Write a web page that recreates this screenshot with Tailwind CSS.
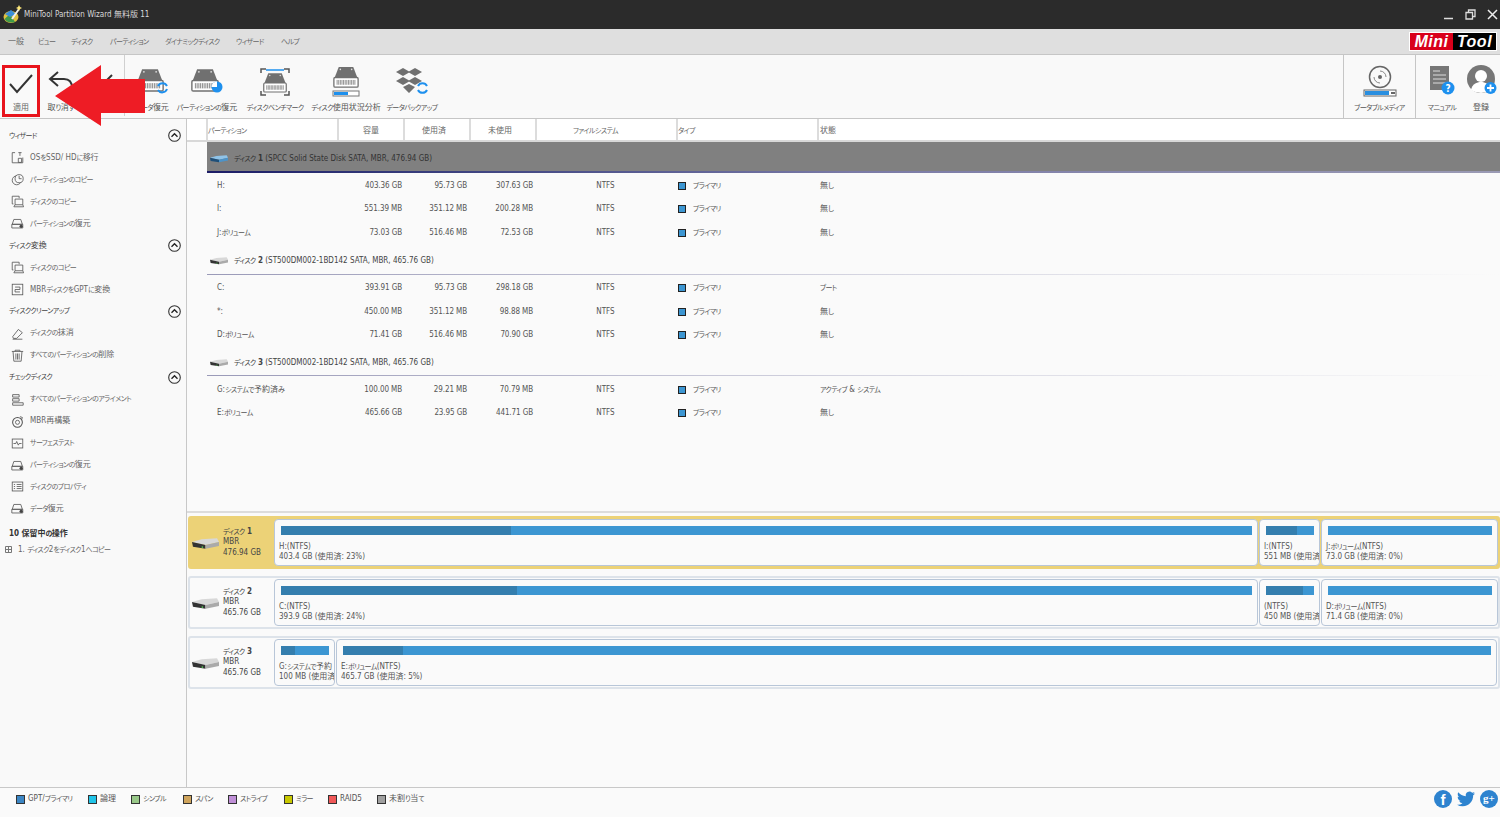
<!DOCTYPE html>
<html lang="ja">
<head>
  <meta charset="UTF-8" />
  <title>MiniTool Partition Wizard</title>
  <script src="https://cdn.jsdelivr.net/npm/@tailwindcss/browser@4"></script>
</head>
<body class="w-[1500px] h-[817px] overflow-hidden flex flex-col bg-[#fafafa] text-[#555] text-[8px] font-['DejaVu_Sans_Condensed','Noto_Sans_CJK_JP',sans-serif]">

  <svg class="hidden">
    <symbol id="hdd" viewBox="0 0 32 26">
      <path d="M7 0H25L30 13H2Z" fill="#707070"/>
      <circle cx="9" cy="3" r="1" fill="#ddd"/><circle cx="23" cy="3" r="1" fill="#ddd"/>
      <rect x="1" y="13" width="30" height="12" rx="1.5" fill="#fff" stroke="#707070" stroke-width="1.6"/>
      <path d="M5 16V22M7 16V22M9 16V22M11 16V22M13 16V22M15 16V22M17 16V22M19 16V22M21 16V22M23 16V22M25 16V22M27 16V22" stroke="#777" stroke-width="1"/>
    </symbol>
    <symbol id="drive" viewBox="0 0 28 14">
      <path d="M0 6L10 3L26 2L28 6L14 9Z" fill="#d8d8d8"/>
      <path d="M0 6L14 9V13L1 11Z" fill="#333"/>
      <path d="M14 9L28 6V10L14 13Z" fill="#aaa"/>
      <rect x="10" y="10.500" width="1.500" height="1.500" fill="#5c5"/>
    </symbol>
    <symbol id="ssd" viewBox="0 0 28 14">
      <path d="M0 6L10 3L26 2L28 6L14 9Z" fill="#8fc3e8"/>
      <path d="M0 6L14 9V13L1 11Z" fill="#1f4f78"/>
      <path d="M14 9L28 6V10L14 13Z" fill="#4d93c8"/>
    </symbol>
    <symbol id="s-copy" viewBox="0 0 16 16">
      <path d="M3 11H1.500V1.500H10V4M5 5H14.500V12H5ZM3.500 14.500H15.500M5 12L3.500 14.500M14.500 12L15.500 14.500" fill="none" stroke="#555"/>
    </symbol>
    <symbol id="s-drive" viewBox="0 0 16 16">
      <path d="M3.500 3H12L14 9H1.500ZM1 9H14.500V13.500H1Z" fill="none" stroke="#555"/>
      <circle cx="12.500" cy="11.500" r="2" fill="#444"/>
    </symbol>
  </svg>

  <header class="h-[29px] shrink-0 bg-[#2b2b2b] flex items-center text-[#d8d8d8] pl-[3px] pr-[2px]">
    <svg class="w-[19px] h-[19px] mr-[2px]" viewBox="0 0 19 19">
      <ellipse cx="8" cy="12" rx="7.500" ry="6" fill="#e0c040"/>
      <path d="M1.500 14L7 9L12 17Q5 19 1.500 14Z" fill="#3f9a4a"/>
      <path d="M2 9L8 5L13 9L7 12Z" fill="#3b8ed8"/>
      <path d="M9 14L16 4" stroke="#eee" stroke-width="2"/>
      <path d="M16 0L17 2L19 3L17 4L16 6L15 4L13 3L15 2Z" fill="#ffe97a"/>
    </svg>
    <span>MiniTool Partition Wizard 無料版 11</span>
    <div class="ml-auto flex items-center gap-[11px]">
      <svg class="w-[11px] h-[11px]" viewBox="0 0 11 11"><path d="M1 9.500H10" stroke="#ddd" stroke-width="1.500"/></svg>
      <svg class="w-[11px] h-[11px]" viewBox="0 0 11 11"><path d="M3.500 3V1H10V7.500H8M1 3.500H7.500V10H1Z" fill="none" stroke="#ddd" stroke-width="1.300"/></svg>
      <svg class="w-[11px] h-[11px]" viewBox="0 0 11 11"><path d="M1 1L10 10M10 1L1 10" stroke="#eee" stroke-width="1.500"/></svg>
    </div>
  </header>

  <nav class="h-[26px] shrink-0 bg-[#dfdfdf] border-b border-[#c6c6c6] flex items-center relative pl-[8px] text-[#666]">
    <span class="w-[30px]">一般</span>
    <span class="w-[33px]">ビュー</span>
    <span class="w-[39px]">ディスク</span>
    <span class="w-[55px]">パーティション</span>
    <span class="w-[71px]">ダイナミックディスク</span>
    <span class="w-[45px]">ウィザード</span>
    <span>ヘルプ</span>
    <div class="absolute right-[3px] top-[3px] flex h-[19px] w-[88px] border border-white text-white font-bold italic text-[16px] leading-[17px] tracking-[.5px] font-['Liberation_Sans',sans-serif]">
      <span class="w-[44px] bg-[#d9001b] text-center">Mini</span>
      <span class="w-[44px] bg-black text-center">Tool</span>
    </div>
  </nav>

  <section class="h-[64px] shrink-0 bg-[#f9f9f9] border-b border-[#c6c6c6] flex relative">
    <div class="w-[125px] shrink-0 flex border-r border-[#d0d0d0] mb-[2px]">
      <button class="w-[38px] h-[52px] mt-[10px] ml-[2px] border-[3px] border-[#e8141c] flex flex-col items-center">
        <svg class="w-[28px] h-[24px] mt-[4px]" viewBox="0 0 28 24"><path d="M3 12L10 20L25 3" fill="none" stroke="#333" stroke-width="2"/></svg>
        <span class="mt-[7px] text-[#666] leading-[10px]">適用</span>
      </button>
      <div class="w-[42px] mt-[10px] flex flex-col items-center">
        <svg class="w-[26px] h-[20px] mt-[5px]" viewBox="0 0 26 20"><path d="M10 2L2 9L10 16M2 9H16C21 9 24 12 24 18" fill="none" stroke="#333" stroke-width="2"/></svg>
        <span class="mt-[12px] whitespace-nowrap">取り消す</span>
      </div>
      <div class="w-[40px] mt-[10px] flex flex-col items-center">
        <svg class="w-[14px] h-[14px] mt-[8px] ml-[9px]" viewBox="0 0 14 14"><path d="M2 12L12 2" stroke="#333" stroke-width="2"/></svg>
      </div>
    </div>
    <div id="tools" class="flex-1 flex"></div>
    <div class="w-[72px] border-l border-[#c6c6c6] flex flex-col items-center">
      <svg class="w-[36px] h-[32px] mt-[10px]" viewBox="0 0 36 32">
        <circle cx="18" cy="12" r="10.500" fill="none" stroke="#666" stroke-width="1.500"/>
        <circle cx="18" cy="12" r="2" fill="#666"/>
        <path d="M18 6A6 6 0 0 1 24 12M18 18A6 6 0 0 1 12 12" fill="none" stroke="#888"/>
        <rect x="2" y="25" width="32" height="6" fill="#fff" stroke="#666"/>
        <rect x="3" y="26" width="24" height="4" fill="#2a8fe0"/>
        <rect x="29" y="27" width="4" height="2" fill="#666"/>
      </svg>
      <span class="mt-[5px] whitespace-nowrap">ブータブルメディア</span>
    </div>
    <div class="w-[85px] border-l border-[#c6c6c6] flex pl-[14px] gap-[12px] relative whitespace-nowrap">
      <div class="flex flex-col items-center w-[24px]">
        <svg class="w-[26px] h-[32px] mt-[9px]" viewBox="0 0 26 32">
          <rect x="1" y="2" width="19" height="24" fill="#777"/>
          <path d="M4 7H11M4 11H17M4 15H17M4 19H17" stroke="#ddd"/>
          <circle cx="19" cy="24" r="6.500" fill="#1e90ee"/>
          <text x="19" y="27.500" text-anchor="middle" font-size="10" font-weight="bold" fill="#fff">?</text>
        </svg>
        <span class="mt-[6px]">マニュアル</span>
      </div>
      <div class="flex flex-col items-center w-[30px]">
        <svg class="w-[31px] h-[32px] mt-[9px]" viewBox="0 0 31 32">
          <circle cx="15" cy="15" r="14" fill="#777"/>
          <circle cx="15" cy="12" r="6" fill="#fff"/>
          <path d="M5 26C6 20 11 18 15 18S24 20 25 26Q15 32 5 26Z" fill="#fff"/>
          <circle cx="24.500" cy="24" r="6" fill="#1e90ee"/>
          <path d="M21 24H28M24.500 20.500V27.500" stroke="#fff" stroke-width="1.800"/>
        </svg>
        <span class="mt-[6px]">登録</span>
      </div>
    </div>
    <svg class="absolute left-[55px] top-[9px] w-[90px] h-[62px] z-10" viewBox="0 0 90 62">
      <path d="M0 32L46 1V15H90V49H46V62Z" fill="#ee1c25"/>
    </svg>
  </section>

  <main class="flex-1 flex min-h-0">
    <aside id="side" class="w-[187px] shrink-0 bg-[#f9f9f9] border-r border-[#c8c8c8] pt-[6px]"></aside>
    <div class="flex-1 flex flex-col min-w-0">
      <div class="h-[394px] shrink-0 border-b-2 border-[#dcdcdc]">
        <div class="grid grid-cols-[19px_131px_66px_66px_66px_141px_141px_1fr] h-[23px] border-b-2 border-[#d8d8d8] text-[#666] bg-white">
          <div></div>
          <div class="border-l-2 border-[#dcdcdc] flex items-center pt-[2px]">パーティション</div>
          <div class="border-l-2 border-[#dcdcdc] flex items-center justify-center pt-[2px]">容量</div>
          <div class="border-l-2 border-[#dcdcdc] flex items-center justify-center pt-[2px] pr-[6px]">使用済</div>
          <div class="border-l-2 border-[#dcdcdc] flex items-center justify-center pt-[2px] pr-[6px]">未使用</div>
          <div class="border-l-2 border-[#dcdcdc] flex items-center justify-center pt-[2px] pr-[22px]">ファイルシステム</div>
          <div class="border-l-2 border-[#dcdcdc] flex items-center pt-[2px]">タイプ</div>
          <div class="border-l-2 border-[#dcdcdc] flex items-center pl-[1px] pt-[2px]">状態</div>
        </div>
        <div id="table" class="pl-[20px]"></div>
      </div>
      <div id="map" class="flex-1 flex flex-col gap-[7px] pt-[3px] pl-[1px]"></div>
    </div>
  </main>

  <footer class="h-[30px] shrink-0 bg-[#fafafa] border-t border-[#c8c8c8] flex items-start pt-[5px] pl-[16px] relative">
    <div id="legend" class="flex items-center"></div>
    <div class="absolute right-[2px] top-[2px] flex items-center gap-[5px]">
      <span class="w-[18px] h-[18px] rounded-full bg-[#2d83cf] text-white font-bold text-[15px] leading-[20px] text-center font-['Liberation_Sans',sans-serif]">f</span>
      <svg class="w-[18px] h-[18px]" viewBox="0 0 24 24"><path fill="#2d83cf" d="M23.953 4.57a10 10 0 01-2.825.775 4.958 4.958 0 002.163-2.723c-.951.555-2.005.959-3.127 1.184a4.92 4.92 0 00-8.384 4.482C7.69 8.095 4.067 6.13 1.64 3.162a4.822 4.822 0 00-.666 2.475c0 1.71.87 3.213 2.188 4.096a4.904 4.904 0 01-2.228-.616v.06a4.923 4.923 0 003.946 4.827 4.996 4.996 0 01-2.212.085 4.936 4.936 0 004.604 3.417 9.867 9.867 0 01-6.102 2.105c-.39 0-.779-.023-1.17-.067a13.995 13.995 0 007.557 2.209c9.053 0 13.998-7.496 13.998-13.985 0-.21 0-.42-.015-.63A9.935 9.935 0 0024 4.59z"/></svg>
      <span class="w-[18px] h-[18px] rounded-full bg-[#2d83cf] text-white font-bold text-[11px] leading-[17px] text-center font-['Liberation_Serif',serif]">g+</span>
    </div>
  </footer>

  <script>
    const TOOLS = [
      { w: 54, label: "データ復元", icon: "#1e90ee" },
      { w: 56, label: "パーティションの復元", icon: "#1e90ee", pie: true },
      { w: 80, label: "ディスクベンチマーク", bracket: true },
      { w: 62, label: "ディスク使用状況分析", bar: true },
      { w: 70, label: "データバックアップ", box: true }
    ];

    function toolIcon(t) {
      if (t.box) {
        return `<svg class="w-[34px] h-[28px] mt-[12px]" viewBox="0 0 34 28">
          <path d="M8 1L15 5L8 9L1 5ZM20 1L27 5L20 9L13 5ZM8 10L15 14L8 18L1 14ZM20 10L27 14L20 18L13 14ZM8 20L14 17L20 20L14 26Z" fill="#707070"/>
          <path d="M23 19A5 5 0 0 1 32 19M32 23A5 5 0 0 1 23 23" fill="none" stroke="#1e90ee" stroke-width="2"/></svg>`;
      }
      if (t.bar) {
        return `<svg class="w-[28px] h-[30px] mt-[12px]" viewBox="0 0 28 30">
          <use href="#hdd" width="26" height="21" x="1" y="0"/>
          <rect x="1" y="24" width="26" height="5" fill="#fff" stroke="#777"/><rect x="2" y="25" width="14" height="3" fill="#1e90ee"/></svg>`;
      }
      if (t.bracket) {
        return `<svg class="w-[30px] h-[28px] mt-[13px]" viewBox="0 0 30 28">
          <path d="M1 5V1H6M24 1H29V5M1 23V27H6M24 27H29V23" fill="none" stroke="#555" stroke-width="1.500"/>
          <path d="M6 2H24" stroke="#1e90ee" stroke-width="1.500"/>
          <use href="#hdd" width="24" height="20" x="3" y="5"/></svg>`;
      }
      return `<svg class="w-[32px] h-[26px] mt-[14px]" viewBox="0 0 32 26">
        <use href="#hdd" width="28" height="23"/>
        ${t.pie
          ? `<circle cx="26" cy="18" r="5.500" fill="${t.icon}"/><path d="M26 18V12.500A5.500 5.500 0 0 0 20.500 18Z" fill="#fff"/>`
          : `<path d="M22 17A5 5 0 0 1 31 17M31 20A5 5 0 0 1 22 21" fill="none" stroke="${t.icon}" stroke-width="2"/>`}
      </svg>`;
    }

    document.getElementById("tools").innerHTML = TOOLS.map(t => `
      <div class="flex flex-col items-center shrink-0 whitespace-nowrap" style="width:${t.w}px">
        ${toolIcon(t)}
        <span class="absolute top-[47px]">${t.label}</span>
      </div>`).join("");

    const IC = {
      migrate: `<path d="M5 2H1.500V14.500H14.500V8M9 9H13V14H9ZM9 2H13M11 2V6" fill="none" stroke="#555"/>`,
      part: `<circle cx="7" cy="9" r="5.500" fill="none" stroke="#555"/><circle cx="10" cy="7" r="5" fill="#f9f9f9" stroke="#555"/><path d="M10 3.500V7H13" fill="none" stroke="#555"/>`,
      copy: `<use href="#s-copy"/>`,
      drive: `<use href="#s-drive"/>`,
      convert: `<rect x="1.500" y="1.500" width="13" height="13" fill="none" stroke="#555"/><path d="M5 5H11V8H5V11H11" fill="none" stroke="#555"/>`,
      erase: `<path d="M2 12L9 3L14 7L7 14H3ZM2 15H14" fill="none" stroke="#555"/>`,
      trash: `<path d="M1 3H15M5 3V1.500H11V3M2.500 3L3.500 15H12.500L13.500 3M6 5.500V13M8 5.500V13M10 5.500V13" fill="none" stroke="#555"/>`,
      align: `<path d="M2 2H10V5H2ZM2 7H10V10H2ZM2 12H15V15H2Z" fill="none" stroke="#555"/>`,
      mbr: `<circle cx="8" cy="9" r="6" fill="none" stroke="#555" stroke-width="1.300"/><circle cx="8" cy="9" r="2.500" fill="none" stroke="#555"/><path d="M11 2L14 3L13 6" fill="none" stroke="#555"/>`,
      surface: `<rect x="1.500" y="2.500" width="13" height="11" fill="none" stroke="#555"/><path d="M3 8H6L7 5.500L9 10L10 8H13" fill="none" stroke="#555"/>`,
      props: `<rect x="1.500" y="2.500" width="13" height="11" fill="none" stroke="#555"/><path d="M3.500 5.500H5M3.500 8H5M3.500 10.500H5M7 5.500H13M7 8H13M7 10.500H13" stroke="#555"/>`
    };

    const SIDE = [
      { h: "ウィザード" },
      { t: "OSをSSD/ HDに移行", i: "migrate" },
      { t: "パーティションのコピー", i: "part" },
      { t: "ディスクのコピー", i: "copy" },
      { t: "パーティションの復元", i: "drive" },
      { h: "ディスク変換" },
      { t: "ディスクのコピー", i: "copy" },
      { t: "MBRディスクをGPTに変換", i: "convert" },
      { h: "ディスククリーンアップ" },
      { t: "ディスクの抹消", i: "erase" },
      { t: "すべてのパーティションの削除", i: "trash" },
      { h: "チェックディスク" },
      { t: "すべてのパーティションのアライメント", i: "align" },
      { t: "MBR再構築", i: "mbr" },
      { t: "サーフェステスト", i: "surface" },
      { t: "パーティションの復元", i: "drive" },
      { t: "ディスクのプロパティ", i: "props" },
      { t: "データ復元", i: "drive" }
    ];

    document.getElementById("side").innerHTML = SIDE.map(s => s.h
      ? `<div class="h-[21.950px] flex items-center pl-[9px] pr-[5px] text-[#444]">
          <span>${s.h}</span>
          <svg class="ml-auto w-[13px] h-[13px]" viewBox="0 0 13 13"><circle cx="6.500" cy="6.500" r="5.800" fill="none" stroke="#333" stroke-width="1.100"/><path d="M3.500 7.800L6.500 4.800L9.500 7.800" fill="none" stroke="#222" stroke-width="1.400"/></svg>
        </div>`
      : `<div class="h-[21.950px] flex items-center pl-[11px] text-[#666]">
          <svg class="w-[13px] h-[13px] mr-[6px]" viewBox="0 0 16 16">${IC[s.i]}</svg><span>${s.t}</span>
        </div>`).join("") + `
      <div class="mt-[4px] h-[20px] flex items-center pl-[9px] text-[#333] font-bold">10 保留中の操作</div>
      <div class="h-[12px] flex items-center pl-[5px] text-[#666]">
        <svg class="w-[7px] h-[7px] mr-[6px]" viewBox="0 0 7 7"><path d="M.500 .500H6.500V6.500H.500ZM3.500 .500V6.500M.500 3.500H6.500" fill="none" stroke="#777"/></svg>
        <span>1. ディスク2をディスク1へコピー</span>
      </div>`;

    const DISKS = [
      { name: "1", desc: "(SPCC Solid State Disk SATA, MBR, 476.94 GB)", active: true, rows: [
        ["H:", "403.36 GB", "95.73 GB", "307.63 GB", "無し"],
        ["I:", "551.39 MB", "351.12 MB", "200.28 MB", "無し"],
        ["J:ボリューム", "73.03 GB", "516.46 MB", "72.53 GB", "無し"]
      ]},
      { name: "2", desc: "(ST500DM002-1BD142 SATA, MBR, 465.76 GB)", rows: [
        ["C:", "393.91 GB", "95.73 GB", "298.18 GB", "ブート"],
        ["*:", "450.00 MB", "351.12 MB", "98.88 MB", "無し"],
        ["D:ボリューム", "71.41 GB", "516.46 MB", "70.90 GB", "無し"]
      ]},
      { name: "3", desc: "(ST500DM002-1BD142 SATA, MBR, 465.76 GB)", short: true, rows: [
        ["G:システムで予約済み", "100.00 MB", "29.21 MB", "70.79 MB", "アクティブ & システム"],
        ["E:ボリューム", "465.66 GB", "23.95 GB", "441.71 GB", "無し"]
      ]}
    ];

    document.getElementById("table").innerHTML = DISKS.map(d => `
      ${d.active
        ? `<div class="h-[31px] bg-[#808080] flex items-center pl-[2px] pt-[2px] text-[#333] relative"><div class="absolute left-0 right-0 bottom-0 h-[2px] bg-linear-to-r from-[#1c1c66] via-[#7a7aa6] to-[#9a9ab4]"></div>`
        : `<div class="${d.short ? "h-[30px]" : "h-[31px]"} flex items-center pl-[2px] pt-[3px] text-[#444] relative"><div class="absolute left-0 right-0 bottom-0 h-[1px] bg-linear-to-r from-[#9a9ab8] via-[#d4d4e0] to-transparent"></div>`}
        <svg class="w-[20px] h-[9px] mr-[5px]" viewBox="0 0 28 14"><use href="${d.active ? "#ssd" : "#drive"}"/></svg>
        <span>ディスク <b>${d.name}</b> ${d.desc}</span>
      </div>
      <div class="${d.active ? "" : "pt-[1px]"}">
      ${d.rows.map(r => `
        <div class="h-[23.500px] pt-[2px] grid grid-cols-[131px_65px_66px_66px_141px_141px_1fr] items-center text-[#555]">
          <div class="pl-[10px]">${r[0]}</div>
          <div class="text-right pr-[1px] tracking-[-.1px]">${r[1]}</div>
          <div class="text-right pr-[2px] tracking-[-.1px]">${r[2]}</div>
          <div class="text-right pr-[2px] tracking-[-.1px]">${r[3]}</div>
          <div class="text-center">NTFS</div>
          <div class="flex items-center pl-[2px]"><span class="w-[8px] h-[8px] bg-[#3c96d2] border border-[#222] mr-[7px]"></span><span>プライマリ</span></div>
          <div class="pl-[3px]">${r[4]}</div>
        </div>`).join("")}
      </div>`).join("");

    const MAP = [
      { name: "1", size: "476.94 GB", active: true, parts: [
        { w: 984, l1: "H:(NTFS)", l2: "403.4 GB (使用済: 23%)", used: 23.7 },
        { w: 61, l1: "I:(NTFS)", l2: "551 MB (使用済", used: 65 },
        { w: 177, l1: "J:ボリューム(NTFS)", l2: "73.0 GB (使用済: 0%)", used: 0 }
      ]},
      { name: "2", size: "465.76 GB", parts: [
        { w: 984, l1: "C:(NTFS)", l2: "393.9 GB (使用済: 24%)", used: 24.3 },
        { w: 61, l1: "(NTFS)", l2: "450 MB (使用済", used: 78 },
        { w: 177, l1: "D:ボリューム(NTFS)", l2: "71.4 GB (使用済: 0%)", used: 0 }
      ]},
      { name: "3", size: "465.76 GB", parts: [
        { w: 61, l1: "G:システムで予約", l2: "100 MB (使用済", used: 30 },
        { w: 1161, l1: "E:ボリューム(NTFS)", l2: "465.7 GB (使用済: 5%)", used: 5.2 }
      ]}
    ];

    document.getElementById("map").innerHTML = MAP.map(d => `
      <div class="h-[53px] rounded-[3px] flex items-center border-2 pl-[2px] ${d.active ? "bg-[#ecd277] border-[#ecd277]" : "bg-[#fafafa] border-[#dde3ea]"}">
        <svg class="w-[27px] h-[14px] mt-[1px] shrink-0" viewBox="0 0 28 14"><use href="#drive"/></svg>
        <div class="w-[51px] ml-[4px] leading-[10.500px] text-[#444] shrink-0"><div>ディスク <b>${d.name}</b></div><div>MBR</div><div>${d.size}</div></div>
        <div class="flex gap-[1px] h-[47px]">
          ${d.parts.map(p => `
            <div class="h-full rounded-[4px] border border-[#b8c6d8] bg-[#fafafa] pl-[4px] pr-[2px] overflow-hidden whitespace-nowrap text-[#555] leading-[10px]" style="width:${p.w}px">
              <div class="h-[9px] mt-[6px] ml-[2px] mr-[3px] bg-[#3c96d2]"><div class="h-full bg-[#347eae]" style="width:${p.used}%"></div></div>
              <div class="mt-[7px]">${p.l1}</div><div>${p.l2}</div>
            </div>`).join("")}
        </div>
      </div>`).join("");

    const LEGEND = [
      [72, "GPT/プライマリ", "bg-[#3c86c4]"],
      [43, "論理", "bg-[#20c4e8]"],
      [52, "シンプル", "bg-[#98c888]"],
      [45, "スパン", "bg-[#cfa45c]"],
      [56, "ストライプ", "bg-[#c090d8]"],
      [44, "ミラー", "bg-[#c8c800]"],
      [49, "RAID5", "bg-[#f05858]"],
      [60, "未割り当て", "bg-[#a0a0a0]"]
    ];
    document.getElementById("legend").innerHTML = LEGEND.map(l => `
      <div class="flex items-center" style="width:${l[0]}px">
        <span class="w-[9px] h-[9px] border border-[#333] mr-[3px] ${l[2]}"></span><span>${l[1]}</span>
      </div>`).join("");

    // the app's UI font has narrow kana, so kana runs get a smaller proportional setting
    const walker = document.createTreeWalker(document.body, NodeFilter.SHOW_TEXT);
    const nodes = [];
    while (walker.nextNode()) {
      if (walker.currentNode.parentElement.tagName !== "SCRIPT" && /[\u3040-\u30FF]/.test(walker.currentNode.data)) nodes.push(walker.currentNode);
    }
    nodes.forEach(n => {
      const box = document.createElement("span");
      box.innerHTML = n.data.replace(/[\u3040-\u30FF]+/g, m => `<span class="text-[7px] tracking-[-.6px] [font-feature-settings:'palt']">${m}</span>`);
      n.replaceWith(box);
    });
  </script>
</body>
</html>
